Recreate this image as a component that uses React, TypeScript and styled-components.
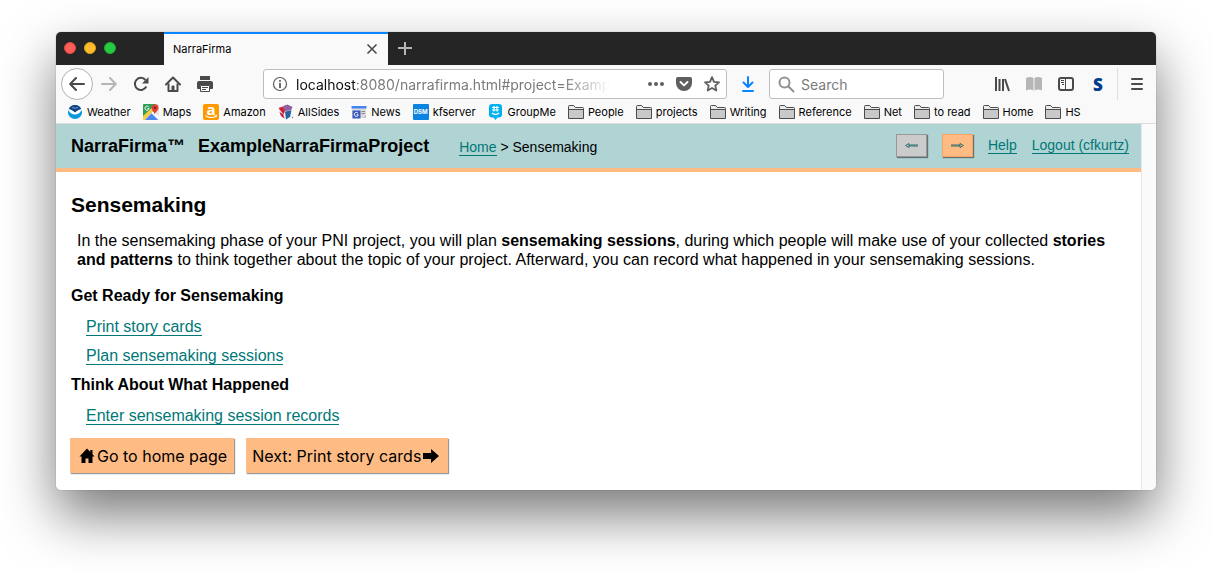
import React from "react";
import styled, { createGlobalStyle, css } from "styled-components";

const uiFont = `Inter, "Liberation Sans", sans-serif`;
const pageFont = `"Liberation Sans", Arial, sans-serif`;
const teal = "#007877";
const orange = "#ffbb84";

const GlobalStyle = createGlobalStyle`
  *, *::before, *::after { box-sizing: border-box; }
  body { margin: 0; background: #fff; font-family: ${pageFont}; color: #000; }
  button, input { font: inherit; color: inherit; }
`;

const Desktop = styled.div`
  padding: 32px 56px 80px;
  overflow: hidden;
`;

const Window = styled.div`
  border-radius: 5px;
  background: #f9f9fa;
  box-shadow: 0 0 1px rgba(0, 0, 0, 0.5), 0 25px 54px rgba(0, 0, 0, 0.53);
`;

const TabBar = styled.div`
  display: flex;
  height: 33px;
  background: #252525;
  border-radius: 5px 5px 0 0;
`;

const Lights = styled.div`
  display: flex;
  align-items: center;
  gap: 8px;
  width: 108px;
  padding: 0 8px 2px;
`;

const Light = styled.button<{ $fill: string; $edge: string }>`
  width: 12px;
  height: 12px;
  padding: 0;
  border: 1px solid ${(p) => p.$edge};
  border-radius: 50%;
  background: ${(p) => p.$fill};
`;

const Tab = styled.div`
  display: flex;
  align-items: center;
  justify-content: space-between;
  width: 224px;
  padding: 0 6px 2px 9px;
  border-top: 2px solid #0a84ff;
  background: #f9f9fa;
  font: 11px ${uiFont};
`;

const PlainButton = styled.button<{ $width?: number; $round?: boolean; $dim?: boolean }>`
  display: flex;
  flex: none;
  align-items: center;
  justify-content: center;
  width: ${(p) => p.$width ?? 32}px;
  height: ${(p) => (p.$round ? "32px" : "auto")};
  padding: 0;
  border: 0;
  background: none;
  color: ${(p) => (p.$dim ? "#b6b6b7" : "#4a4a4b")};
  ${(p) =>
    p.$round &&
    css`
      border: 1px solid #b1b1b1;
      border-radius: 50%;
      background: #fff;
    `}
`;

const NavBar = styled.div`
  display: flex;
  align-items: center;
  height: 38px;
  padding: 0 3px 0 5px;
`;

const Spacer = styled.div`
  flex: 42 1 42px;
`;

const Field = styled.label<{ $grow: number }>`
  display: flex;
  flex: ${(p) => p.$grow} 1 ${(p) => p.$grow}px;
  align-items: center;
  min-width: 0;
  height: 30px;
  padding: 0 0 0 8px;
  border: 1px solid #bebebf;
  border-radius: 3px;
  background: #fff;
  font: 14px ${uiFont};
`;

const Address = styled.div`
  flex: 1;
  min-width: 0;
  margin-left: 8px;
  overflow: hidden;
  white-space: nowrap;
  color: #7a7a7a;
  mask-image: linear-gradient(to left, transparent, #000 48px);
`;

const Host = styled.span`
  color: #0c0c0d;
`;

const PageActions = styled.div`
  display: flex;
  padding-left: 32px;
`;

const SearchInput = styled.input`
  flex: 1;
  min-width: 0;
  margin-left: 6px;
  padding: 0;
  border: 0;
  outline: 0;
  background: none;
  &::placeholder { color: #7b7b7b; opacity: 1; }
`;

const Download = styled.div`
  display: flex;
  padding: 0 5px;
`;

const MenuArea = styled.div`
  display: flex;
  align-items: center;
  height: 32px;
  margin-left: 3px;
  padding-left: 3px;
  border-left: 1px solid #dededf;
`;

const SnapMark = styled.span`
  font: 800 17px "Open Sans", ${uiFont};
  color: #003b8e;
`;

const Bookmarks = styled.nav`
  display: flex;
  align-items: center;
  gap: 12px;
  height: 21px;
  padding: 0 11px 3px;
  border-bottom: 1px solid #dcdcdd;
  font: 11px/16px ${uiFont};
  white-space: nowrap;
`;

const Bookmark = styled.a`
  display: flex;
  align-items: center;
  gap: 4px;
  color: #000;
  text-decoration: none;
`;

const LetterIcon = styled.span`
  display: flex;
  align-items: center;
  justify-content: center;
  width: 16px;
  height: 16px;
  border-radius: 1px;
  background: #0a84e0;
  color: #fff;
  font: 700 6px ${uiFont};
`;

const Viewport = styled.div`
  display: flex;
  overflow: hidden;
  border-radius: 0 0 5px 5px;
`;

const Page = styled.div`
  flex: 1;
  min-width: 0;
  background: #fff;
`;

const ScrollTrack = styled.div`
  flex: none;
  width: 15px;
  border-left: 1px solid #e7e7e7;
  background: #fafafa;
`;

const Header = styled.header`
  display: flex;
  align-items: center;
  height: 48px;
  padding: 0 12px 0 15px;
  border-bottom: 4px solid ${orange};
  background: #b0d4d4;
  font-size: 14px;
`;

const Brand = styled.span`
  margin-right: 13px;
  font-size: 18px;
  font-weight: 700;
`;

const Crumbs = styled.nav`
  flex: 1;
  margin-left: 17px;
  padding-top: 2px;
`;

const PageLink = styled.a`
  border-bottom: 1px solid ${teal};
  color: ${teal};
  text-decoration: none;
`;

const HeaderTools = styled.div`
  display: flex;
  align-items: center;
  gap: 15px;
  padding-bottom: 2px;
`;

const StepButton = styled.button<{ $disabled?: boolean }>`
  display: flex;
  align-items: center;
  justify-content: center;
  width: 31px;
  height: 23px;
  padding: 0;
  border: 1px solid ${(p) => (p.$disabled ? "#979797" : "#f4a460")};
  background: ${(p) => (p.$disabled ? "#cbcbcb" : orange)};
  box-shadow: 1px 1px 1px rgba(80, 90, 90, 0.8);
`;

const Main = styled.main`
  padding: 21px 20px 17px 14px;
  font-size: 16px;
  line-height: 19px;
`;

const Title = styled.h1`
  margin: 0;
  padding-left: 1px;
  font-size: 21px;
  line-height: 24px;
`;

const Intro = styled.p`
  margin: 14px 7px 17px;
`;

const Section = styled.h2`
  margin: 0;
  padding-left: 1px;
  font-size: 16px;
  line-height: 19px;
`;

const LinkList = styled.ul`
  display: flex;
  flex-direction: column;
  gap: 10px;
  margin: 0;
  padding: 12px 0 10px 16px;
  list-style: none;
`;

const ButtonRow = styled.div`
  display: flex;
  gap: 12px;
  padding-top: 3px;
`;

const ActionButton = styled.button<{ $lead?: boolean }>`
  display: flex;
  align-items: center;
  gap: 2px;
  height: 35px;
  padding: ${(p) => (p.$lead ? "0 7px 0 9px" : "0 9px 0 6px")};
  border: 0;
  background: ${orange};
  box-shadow: 1px 1px 1px rgba(0, 0, 0, 0.4);
  font: 16px ${uiFont};
`;

const Stroke = ({ children }: { children: React.ReactNode }) => (
  <svg width="16" height="16" viewBox="0 0 16 16" fill="none" stroke="currentColor" strokeWidth="2" strokeLinecap="round" strokeLinejoin="round" aria-hidden>
    {children}
  </svg>
);

const Folder = () => (
  <svg width="16" height="16" viewBox="0 0 16 16" aria-hidden>
    <path d="M.5 14.500V2.500q0-1 1-1h4.200l1.600 2H14.500q1 0 1 1v10z" fill="#c9c9c9" stroke="#4c4c4c" />
    <path d="M1 2.500q0-.5.500-.5h4L7 4h8v1H1z" fill="#ececec" />
    <path d="M1 5.500h14" fill="none" stroke="#4c4c4c" />
  </svg>
);

const WeatherIcon = () => (
  <svg width="16" height="16" viewBox="0 0 16 16" aria-hidden>
    <circle cx="8" cy="8" r="7" fill="#0b9ade" />
    <path d="M2 4.800a6.700 6.700 0 0 1 12 0L8 9z" fill="#14437f" />
    <path d="M1.200 5C4 5.500 6 6.800 8 8.500c2-1.700 4-3 6.800-3.500-.5 3.500-3.500 6.500-6.800 6.500S1.700 8.500 1.200 5z" fill="#fff" />
    <path d="M2 7c1 2 3.500 3.500 6 3.500S13 9 14 7l.8 1.500A6.900 6.900 0 0 1 1.200 8.500z" fill="#0b9ade" />
    <path d="M5 3.500Q8 5 11 3.500" fill="none" stroke="#6f9cc9" />
  </svg>
);

const MapsIcon = () => (
  <svg width="16" height="16" viewBox="0 0 16 16" aria-hidden>
    <rect width="16" height="16" rx="1.500" fill="#e3e3e3" />
    <path d="M1 0h12L0 13V1q0-1 1-1z" fill="#2f9e58" />
    <path d="M0 12 11.500 1.500 13 4 1.500 16H1q-1 0-1-1z" fill="#f6cb3f" />
    <path d="M2 16 8.500 9.300 15 16z" fill="#4a86ee" />
    <path d="m8.500 9.300 2-2L16 13v2z" fill="#fff" />
    <path d="M5.800 3.300A2 2 0 1 0 6 4.500H4.500" fill="none" stroke="#fff" />
    <path d="M11.800 11c0-3-3.300-4-3.300-7.200a3.300 3.300 0 0 1 7 0c0 3.200-3.700 4.200-3.700 7.200z" fill="#df4337" />
    <circle cx="12" cy="3.800" r="1.300" fill="#7b231d" />
  </svg>
);

const AmazonIcon = () => (
  <svg width="16" height="16" viewBox="0 0 16 16" aria-hidden>
    <rect width="16" height="16" rx="2" fill="#f90" />
    <text x="8" y="10.500" textAnchor="middle" fill="#fff" fontSize="15" fontWeight="700" fontFamily="Open Sans">a</text>
    <path d="M2.500 11.700q5.500 3.300 10.500.5" fill="none" stroke="#fff" strokeWidth="1.200" />
    <path d="m11.500 11.400 2.300-.2-.8 2" fill="none" stroke="#fff" />
  </svg>
);

const AllSidesIcon = () => (
  <svg width="16" height="16" viewBox="0 0 16 16" aria-hidden>
    <path d="m5 2 4.500-1.500L14.500 3 13 6.500 6.500 7z" fill="#9160a0" />
    <path d="M.5 4 5 2.500 7 7l-1.500 4z" fill="#cf2033" />
    <path d="m7 7.500 6.500-1L12 13l-4 2.500z" fill="#2962a0" />
    <path d="m.5 5 5 5 2 5.500L3 12z" fill="#d9e5ef" />
    <path d="M1.500 8 5 10l1.500 4.500L3 12z" fill="#cf2033" />
    <circle cx="14.500" cy="13.500" r=".7" fill="#777" />
  </svg>
);

const NewsIcon = () => (
  <svg width="16" height="16" viewBox="0 0 16 16" aria-hidden>
    <path d="M1 2h14v10.500L13.500 14H1z" fill="#dcdcdc" />
    <path d="M.5 2h15v2.500H.5z" fill="#4285f4" />
    <path d="M1.500 6.500h8v8h-8z" fill="#3c58c0" />
    <path d="M7 9.300a2 2 0 1 0 .3 1.500H5.600" fill="none" stroke="#fff" />
    <path d="M10.500 7.500H14M10.500 9.500H14" stroke="#8a8a8a" />
    <path d="M11 14q3 0 4-3v2l-1 1z" fill="#aaa" />
  </svg>
);

const GroupMeIcon = () => (
  <svg width="16" height="16" viewBox="0 0 16 16" aria-hidden>
    <path d="M4 0h7q3 0 3 3v7.500q0 3-3 3H9.500L7.500 16l-2-2.500H4q-3 0-3-3V3q0-3 3-3z" fill="#00b2ef" />
    <path d="M6 2v5.500M9 2v5.500M4 3.500h7M4 6h7" stroke="#fff" strokeWidth="1.200" />
    <path d="M4 9q3.500 2.800 7 0" fill="none" stroke="#fff" strokeWidth="1.300" />
  </svg>
);

const bookmarks: [string, React.ReactNode][] = [
  ["Weather", <WeatherIcon />],
  ["Maps", <MapsIcon />],
  ["Amazon", <AmazonIcon />],
  ["AllSides", <AllSidesIcon />],
  ["News", <NewsIcon />],
  ["kfserver", <LetterIcon>DSM</LetterIcon>],
  ["GroupMe", <GroupMeIcon />],
  ...["People", "projects", "Writing", "Reference", "Net", "to read", "Home", "HS"].map(
    (name): [string, React.ReactNode] => [name, <Folder />]
  ),
];

const StepArrow = ({ flip }: { flip?: boolean }) => (
  <svg width="15" height="7" viewBox="0 0 15 7" fill="none" stroke="#2f6e6e" aria-hidden>
    {flip ? <path d="M14 3H5M14 4H5M5 1.500 1.500 3.500 5 5.500z" /> : <path d="M1 3h9M1 4h9M10 1.500l3.500 2-3.500 2z" />}
  </svg>
);

export default function App() {
  return (
    <Desktop>
      <GlobalStyle />
      <Window>
        <TabBar>
          <Lights>
            <Light $fill="#ff5f57" $edge="#e2463f" aria-label="Close window" />
            <Light $fill="#ffbd2e" $edge="#e0a01f" aria-label="Minimize window" />
            <Light $fill="#28ca42" $edge="#1bac2c" aria-label="Zoom window" />
          </Lights>
          <Tab>
            <span>NarraFirma</span>
            <PlainButton $width={20} aria-label="Close tab">
              <svg width="12" height="12" viewBox="0 0 12 12" stroke="currentColor" strokeWidth="1.600" aria-hidden>
                <path d="m1.500 1.500 9 9m0-9-9 9" />
              </svg>
            </PlainButton>
          </Tab>
          <PlainButton $width={34} $dim aria-label="New tab">
            <svg width="14" height="14" viewBox="0 0 14 14" stroke="currentColor" strokeWidth="2" aria-hidden>
              <path d="M0 6h14M7 -1v14" />
            </svg>
          </PlainButton>
        </TabBar>

        <NavBar>
          <PlainButton $round aria-label="Back">
            <Stroke><path d="M15 8H1.500M7 2 1.200 8 7 14" /></Stroke>
          </PlainButton>
          <PlainButton $dim aria-label="Forward">
            <Stroke><path d="M1 8h13.500M9 2l5.800 6L9 14" /></Stroke>
          </PlainButton>
          <PlainButton aria-label="Reload">
            <svg width="16" height="16" viewBox="0 0 16 16" aria-hidden>
              <path d="M13.300 10.500A6 6 0 1 1 12.500 4" fill="none" stroke="currentColor" strokeWidth="2" />
              <path d="M15.500 1v6.500H9z" fill="currentColor" />
            </svg>
          </PlainButton>
          <PlainButton aria-label="Home">
            <svg width="16" height="16" viewBox="0 0 16 16" fill="none" stroke="currentColor" aria-hidden>
              <path d="M1 8.500 8 1.500l7 7" strokeWidth="2" strokeLinecap="round" strokeLinejoin="round" />
              <path d="M3.500 7.500V15h9V7.500" strokeWidth="2" strokeLinejoin="round" />
              <path d="M6.500 15v-4.500q0-1 1-1h1q1 0 1 1V15z" fill="currentColor" stroke="none" />
            </svg>
          </PlainButton>
          <PlainButton aria-label="Print">
            <svg width="16" height="16" viewBox="0 0 16 16" fill="currentColor" aria-hidden>
              <path d="M3 0h10v4H3z" />
              <path d="M2 5h12q2 0 2 2v5q0 1-1 1h-2V9H3v4H1q-1 0-1-1V7q0-2 2-2z" />
              <path d="M3.500 9.500h9v6h-9z" fill="#fff" stroke="currentColor" />
              <path d="M5 11h6v1H5zM5 13h4v1H5z" />
            </svg>
          </PlainButton>
          <Spacer />
          <Field as="div" $grow={464}>
            <svg width="16" height="16" viewBox="0 0 16 16" fill="none" stroke="#5c5c5c" aria-hidden>
              <circle cx="8" cy="8" r="6.500" strokeWidth="1.200" />
              <path d="M8 7v5M8 4v1.800" strokeWidth="1.800" />
            </svg>
            <Address>
              <Host>localhost</Host>:8080/narrafirma.html#project=Example
            </Address>
            <PageActions>
              <PlainButton $width={28} aria-label="Page actions">
                <svg width="16" height="16" viewBox="0 0 16 16" fill="#5f5f60" aria-hidden>
                  <circle cx="2" cy="8" r="2" /><circle cx="8" cy="8" r="2" /><circle cx="14" cy="8" r="2" />
                </svg>
              </PlainButton>
              <PlainButton $width={28} aria-label="Save to Pocket">
                <svg width="16" height="16" viewBox="0 0 16 16" aria-hidden>
                  <path d="M1.800 1h12.400Q16 1 16 2.800V7A8 8 0 0 1 0 7V2.800Q0 1 1.800 1z" fill="#5f5f60" />
                  <path d="m4.500 6 3.500 3.400L11.500 6" fill="none" stroke="#fff" strokeWidth="2" strokeLinecap="round" strokeLinejoin="round" />
                </svg>
              </PlainButton>
              <PlainButton $width={28} aria-label="Bookmark this page">
                <svg width="16" height="16" viewBox="0 0 16 16" fill="none" stroke="#5f5f60" strokeWidth="1.800" strokeLinejoin="round" aria-hidden>
                  <path d="m8 1.200 2 4.600 5 .5-3.700 3.300 1 4.900L8 12l-4.300 2.500 1-4.900L1 6.300l5-.5z" />
                </svg>
              </PlainButton>
            </PageActions>
          </Field>
          <Download>
            <PlainButton aria-label="Downloads">
              <svg width="16" height="16" viewBox="0 0 16 16" fill="none" stroke="#0a84ff" strokeWidth="2" strokeLinecap="round" strokeLinejoin="round" aria-hidden>
                <path d="M8 1v9.500M3.500 6.500 8 11l4.500-4.500M3 15h10" />
              </svg>
            </PlainButton>
          </Download>
          <Field $grow={175}>
            <svg width="17" height="17" viewBox="0 0 17 17" fill="none" stroke="#919191" strokeWidth="2" strokeLinecap="round" aria-hidden>
              <circle cx="6.500" cy="6.500" r="5" /><path d="m10.500 10.500 5 5" />
            </svg>
            <SearchInput placeholder="Search" aria-label="Search" />
          </Field>
          <Spacer />
          <PlainButton aria-label="Library">
            <svg width="16" height="16" viewBox="0 0 16 16" fill="none" stroke="currentColor" strokeWidth="2" aria-hidden>
              <path d="M2 1v14M5.500 3v12M9 3v12M11 3l4 12" />
            </svg>
          </PlainButton>
          <PlainButton $dim aria-label="Reader view">
            <svg width="16" height="16" viewBox="0 0 16 16" fill="currentColor" aria-hidden>
              <path d="M0 2q4-2 7.500 0v12.500q-3.500-2-7.500 0zM8.500 2q3.500-2 7.500 0v12.500q-4-2-7.500 0z" />
            </svg>
          </PlainButton>
          <PlainButton aria-label="Sidebars">
            <svg width="16" height="16" viewBox="0 0 16 16" fill="none" stroke="currentColor" aria-hidden>
              <rect x="1" y="2" width="14" height="12" rx="2" strokeWidth="2" />
              <path d="M7.500 2v12M3 4.500h3M3 6.500h3M4 8.500h2" />
            </svg>
          </PlainButton>
          <PlainButton aria-label="S extension"><SnapMark>S</SnapMark></PlainButton>
          <MenuArea>
            <PlainButton aria-label="Open menu">
              <svg width="16" height="16" viewBox="0 0 16 16" stroke="currentColor" strokeWidth="2" strokeLinecap="round" aria-hidden>
                <path d="M3 3h10M3 8h10M3 13h10" />
              </svg>
            </PlainButton>
          </MenuArea>
        </NavBar>

        <Bookmarks aria-label="Bookmarks">
          {bookmarks.map(([name, icon]) => (
            <Bookmark key={name} href="#">
              {icon}
              {name}
            </Bookmark>
          ))}
        </Bookmarks>

        <Viewport>
          <Page>
            <Header>
              <Brand>NarraFirma™</Brand>
              <Brand>ExampleNarraFirmaProject</Brand>
              <Crumbs aria-label="Breadcrumb">
                <PageLink href="#">Home</PageLink> &gt; Sensemaking
              </Crumbs>
              <HeaderTools>
                <StepButton $disabled aria-label="Previous page"><StepArrow flip /></StepButton>
                <StepButton aria-label="Next page"><StepArrow /></StepButton>
                <PageLink href="#">Help</PageLink>
                <PageLink href="#">Logout (cfkurtz)</PageLink>
              </HeaderTools>
            </Header>
            <Main>
              <Title>Sensemaking</Title>
              <Intro>
                In the sensemaking phase of your PNI project, you will plan <b>sensemaking sessions</b>, during which
                people will make use of your collected <b>stories and patterns</b> to think together about the topic of
                your project. Afterward, you can record what happened in your sensemaking sessions.
              </Intro>
              <Section>Get Ready for Sensemaking</Section>
              <LinkList>
                <li><PageLink href="#">Print story cards</PageLink></li>
                <li><PageLink href="#">Plan sensemaking sessions</PageLink></li>
              </LinkList>
              <Section>Think About What Happened</Section>
              <LinkList>
                <li><PageLink href="#">Enter sensemaking session records</PageLink></li>
              </LinkList>
              <ButtonRow>
                <ActionButton $lead>
                  <svg width="16" height="16" viewBox="0 0 16 16" aria-hidden>
                    <path d="M8 .5.500 8.500h2V15h4v-4.500h3V15h4V8.500h2L13.500 6.200V2h-2.200v2z" />
                  </svg>
                  Go to home page
                </ActionButton>
                <ActionButton>
                  Next: Print story cards
                  <svg width="16" height="16" viewBox="0 0 16 16" aria-hidden>
                    <path d="M0 5h8V1l8 7-8 7v-4H0z" />
                  </svg>
                </ActionButton>
              </ButtonRow>
            </Main>
          </Page>
          <ScrollTrack />
        </Viewport>
      </Window>
    </Desktop>
  );
}
